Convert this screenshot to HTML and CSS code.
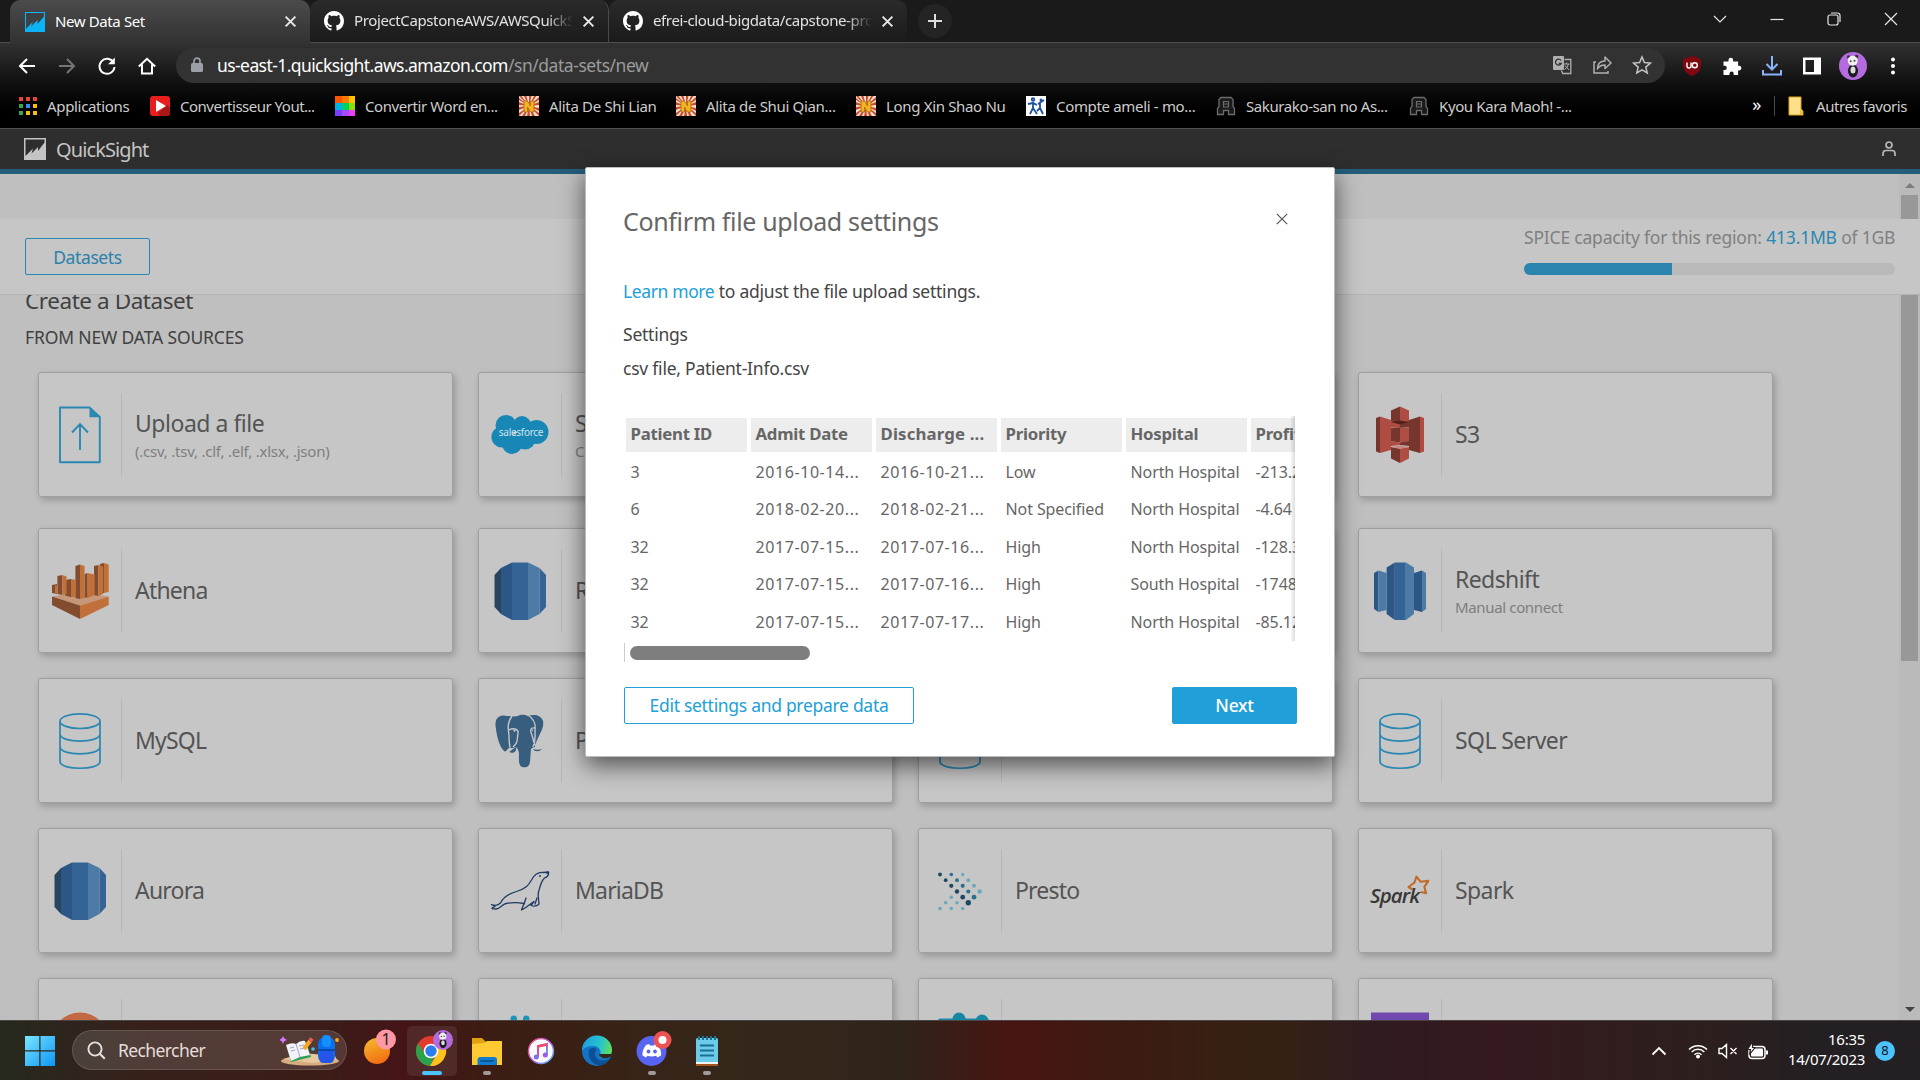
FILE: index.html
```html
<!DOCTYPE html>
<html lang="fr">
<head>
<meta charset="utf-8">
<title>New Data Set</title>
<link rel="stylesheet" href="styles.css">
</head>
<body>
<svg class="defs" width="0" height="0" aria-hidden="true">
  <symbol id="github" viewBox="0 0 16 16"><path fill="#fff" d="M8 0C3.58 0 0 3.58 0 8c0 3.54 2.29 6.53 5.47 7.59.4.07.55-.17.55-.38 0-.19-.01-.82-.01-1.49-2.01.37-2.53-.49-2.69-.94-.09-.23-.48-.94-.82-1.13-.28-.15-.68-.52-.01-.53.63-.01 1.08.58 1.23.82.72 1.21 1.87.87 2.33.66.07-.52.28-.87.51-1.07-1.78-.2-3.64-.89-3.64-3.95 0-.87.31-1.59.82-2.15-.08-.2-.36-1.02.08-2.12 0 0 .67-.21 2.2.82.64-.18 1.32-.27 2-.27s1.36.09 2 .27c1.53-1.04 2.2-.82 2.2-.82.44 1.1.16 1.92.08 2.12.51.56.82 1.27.82 2.15 0 3.07-1.87 3.75-3.65 3.95.29.25.54.73.54 1.48 0 1.07-.01 1.93-.01 2.2 0 .21.15.46.55.38A8 8 0 0 0 16 8c0-4.42-3.58-8-8-8z"/></symbol>
  <symbol id="cross" viewBox="0 0 12 12"><path d="M1.500 1.500l9 9M10.500 1.500l-9 9" fill="none" stroke="currentColor" stroke-width="1.800"/></symbol>
  <symbol id="rays" viewBox="0 0 20 20"><rect width="20" height="20" fill="#f3e2d2"/><path fill="#cf4a2a" d="M10 10L0 0h2.500zM10 10L5 0h2.500zM10 10L10 0h2.500zM10 10L15 0h2.500zM10 10L20 1v3zM10 10L20 6v3zM10 10L20 12v3zM10 10L20 17v3zM10 10L16 20h-3zM10 10L11 20H8zM10 10L6 20H3zM10 10L0 20v-3zM10 10L0 14v-3zM10 10L0 9V6zM10 10L0 4V2z"/><path fill="#f4b41c" stroke="#a8641a" stroke-width=".8" d="M5 5h3.500l3 5V5H15v11h-3.500l-3-5v5H5z"/></symbol>
  <symbol id="arch" viewBox="0 0 20 20"><path fill="#1a1a1a" stroke="#6c6c6c" stroke-width="1.300" d="M5 1.500h10l2 2v7l1.500 2v6h-6v-4h-5v4h-6v-6l1.500-2v-7z"/><path fill="none" stroke="#6c6c6c" stroke-width="1.200" d="M7.500 11V5.500h5V11zM8 8h4"/></symbol>
  <symbol id="database" viewBox="0 0 60 60"><g fill="none" stroke="#2b88b2" stroke-width="1.700"><ellipse cx="30" cy="10.200" rx="20" ry="7.300"/><path d="M10 10.200V50.500c0 9 40 9 40 0V10.200M10 23c0 9.500 40 9.500 40 0M10 35.800c0 9.500 40 9.500 40 0"/></g></symbol>
  <symbol id="rds" viewBox="0 0 60 60"><path fill="#27455e" d="M4.500 14L11 7v46l-6.500-7z"/><path fill="#2b5685" d="M11 7l11-5.500V59l-11-6z"/><path fill="#346496" d="M22 1.500h16V59H22zM49.500 7l6.500 7v32l-6.500 7z"/><path fill="#4d7ba6" d="M38 1.500L49.500 7v46L38 59z"/></symbol>
  <symbol id="panda" viewBox="0 0 28 28"><circle cx="14" cy="14" r="14" fill="#b56be0"/><ellipse cx="14" cy="19" rx="5" ry="6.500" fill="#1d1b1f"/><ellipse cx="14" cy="18" rx="2.500" ry="3.500" fill="#ddd"/><circle cx="9.700" cy="5" r="1.800" fill="#333"/><circle cx="17.500" cy="4.500" r="1.800" fill="#333"/><circle cx="13.700" cy="8.700" r="5" fill="#f0f0f0"/><circle cx="11.700" cy="9.200" r="1" fill="#444"/><circle cx="15.500" cy="8.700" r="1" fill="#444"/></symbol>
</svg>

<div class="tabs">
  <div class="tab tab-active">
    <svg class="fav" viewBox="0 0 20 20"><rect width="20" height="20" fill="#0cb4f5"/><path fill="#3d4146" d="M1 1h18v3.500L12.500 12V8L6 14.500l2-5L1 17z"/></svg>
    <span class="tab-text t-active">New Data Set</span>
    <svg class="tab-x"><use href="#cross"/></svg>
  </div>
  <div class="tab">
    <svg class="fav"><use href="#github"/></svg>
    <span class="tab-text fade">ProjectCapstoneAWS/AWSQuickSight</span>
    <svg class="tab-x"><use href="#cross"/></svg>
  </div>
  <div class="tab tab-last">
    <svg class="fav"><use href="#github"/></svg>
    <span class="tab-text fade">efrei-cloud-bigdata/capstone-project</span>
    <svg class="tab-x"><use href="#cross"/></svg>
  </div>
  <div class="new-tab"><svg width="16" height="16" viewBox="0 0 16 16"><path d="M8 1v14M1 8h14" stroke="#ddd" stroke-width="2"/></svg></div>
  <div class="win-controls">
    <svg viewBox="0 0 14 14"><path d="M1 4l6 6 6-6"/></svg>
    <svg viewBox="0 0 14 14"><path d="M.5 7.500h13"/></svg>
    <svg viewBox="0 0 14 14"><rect x="1" y="3" width="10" height="10" rx="2"/><path d="M4 1h6.500a2.500 2.500 0 0 1 2.500 2.500V10"/></svg>
    <svg viewBox="0 0 14 14"><path d="M1 1l12 12M13 1L1 13"/></svg>
  </div>
</div>

<div class="navbar">
  <div class="nav-icons">
    <svg viewBox="0 0 20 20"><path d="M18 10H3M10 3l-7 7 7 7"/></svg>
    <svg class="off" viewBox="0 0 20 20"><path d="M2 10h15M10 3l7 7-7 7"/></svg>
    <svg viewBox="0 0 20 20"><path d="M16.500 6.500A7.500 7.500 0 1 0 17.500 11"/><path d="M17.800 1.500v6.700h-6.700z" fill="#fff" stroke="none"/></svg>
    <svg viewBox="0 0 20 20"><path d="M1.800 10.500L10 2.800l8.200 7.700M5 8.500V17.500h10V8.500"/></svg>
  </div>
  <div class="omnibox">
    <svg class="lock" width="12" height="16" viewBox="0 0 12 16"><rect y="6" width="12" height="9" rx="1.500" fill="#9aa0a6"/><path d="M3 6V4.200a3 3 0 0 1 6 0V6" fill="none" stroke="#9aa0a6" stroke-width="1.700"/></svg>
    <span class="url">us-east-1.quicksight.aws.amazon.com<span class="path">/sn/data-sets/new</span></span>
    <div class="omni-icons">
      <svg viewBox="0 0 20 20"><rect x="1" y="1" width="11" height="14" rx="1" fill="#b0b0b0"/><path d="M9 5.500A3 3 0 1 0 9.200 8.500H6.800" fill="none" stroke="#333" stroke-width="1.300"/><path d="M12.500 4.500h6.300v14h-8l-1.500-3" fill="none" stroke="#b0b0b0" stroke-width="1.300"/><path d="M11.500 9h6M14.500 7.500V9M16.500 9q-1 4-4 5.500M13 10.500l4 4.500" stroke="#b0b0b0" fill="none"/></svg>
      <svg viewBox="0 0 20 20"><path d="M4 7H2v11h14v-2" fill="none" stroke="#b0b0b0" stroke-width="1.500"/><path d="M5.500 14c0-5 2-8 7.500-8V2l6 6-6 5.500V10c-4 0-6 1-7.500 4z" fill="none" stroke="#b0b0b0" stroke-width="1.500" stroke-linejoin="round"/></svg>
      <svg viewBox="0 0 20 20"><path d="M10 2l2.400 5.600 6 .5-4.600 4 1.400 5.900-5.200-3.200L4.800 18l1.400-5.900-4.600-4 6-.5z" fill="none" stroke="#c4c4c4" stroke-width="1.500"/></svg>
    </div>
  </div>
  <div class="ext-icons">
    <svg viewBox="0 0 20 20"><path d="M10 0l9 3v6c0 5-4 9-9 11C5 18 1 14 1 9V3z" fill="#800610"/><path d="M5 6.500v3.500q0 2 2 2t2-2V6.500" fill="none" stroke="#fff" stroke-width="1.400"/><circle cx="12.800" cy="9.200" r="2.500" fill="none" stroke="#fff" stroke-width="1.400"/></svg>
    <svg viewBox="0 0 20 20"><path fill="#fff" d="M1.500 5.500h5V4a2.300 2.300 0 0 1 4.600 0v1.500h5v4.300h1a2.300 2.300 0 0 1 0 4.600h-1v4.600h-4.400v-1.500a2.100 2.100 0 0 0-4.200 0V19h-6v-5h1.200a2.100 2.100 0 0 0 0-4.200H1.500z"/></svg>
    <svg viewBox="0 0 20 20"><path fill="none" stroke="#8ab4f8" stroke-width="2" d="M10 0v13M4.500 8l5.500 5.500L15.500 8M1 14v4.500h18V14"/></svg>
    <svg viewBox="0 0 20 20"><path fill="#fff" fill-rule="evenodd" d="M1 1.500h18v17H1zM3.500 4v12H12V4z"/></svg>
    <svg class="avatar"><use href="#panda"/></svg>
    <svg viewBox="0 0 20 20"><g fill="#fff"><circle cx="9" cy="3.500" r="2"/><circle cx="9" cy="10" r="2"/><circle cx="9" cy="16.500" r="2"/></g></svg>
  </div>
</div>

<div class="bookmarks">
  <div class="bm b1"><svg viewBox="0 0 20 20"><g fill="#ea4335"><path d="M1 1h4v4H1zM8 1h4v4H8zM15 1h4v4h-4z"/></g><path fill="#34a853" d="M1 8h4v4H1zM1 15h4v4H1z"/><path fill="#4285f4" d="M8 8h4v4H8z"/><path fill="#fbbc05" d="M15 8h4v4h-4zM8 15h4v4H8zM15 15h4v4h-4z"/></svg><span>Applications</span></div>
  <div class="bm b2"><svg viewBox="0 0 20 20"><rect width="20" height="20" rx="3" fill="#e91d1d"/><path d="M8 17l9-8 3 3v5a3 3 0 0 1-3 3H10z" fill="#a81616"/><path fill="#fff" d="M6 4l10 6-10 6z"/></svg><span>Convertisseur Yout...</span></div>
  <div class="bm b3"><svg viewBox="0 0 20 20"><path fill="#f50" d="M0 0h7v7H0z"/><path fill="#ff7a00" d="M7 0h7v7H7z"/><path fill="#ffc400" d="M14 0h6v7h-6z"/><path fill="#00b2e3" d="M0 7h7v7H0z"/><path fill="#00d06a" d="M7 7h7v7H7z"/><path fill="#8be000" d="M14 7h6v7h-6z"/><path fill="#7a3cff" d="M0 14h7v6H0z"/><path fill="#a64cff" d="M7 14h7v6H7z"/><path fill="#f03cf5" d="M14 14h6v6h-6z"/></svg><span>Convertir Word en...</span></div>
  <div class="bm b4"><svg><use href="#rays"/></svg><span>Alita De Shi Lian</span></div>
  <div class="bm b5"><svg><use href="#rays"/></svg><span>Alita de Shui Qian...</span></div>
  <div class="bm b6"><svg><use href="#rays"/></svg><span>Long Xin Shao Nu</span></div>
  <div class="bm b7"><svg viewBox="0 0 20 20"><rect width="20" height="20" fill="#fff"/><g stroke="#1c50a0" stroke-width="1.800" fill="none"><circle cx="7" cy="3.500" r="1.300"/><path d="M7 6v6l-3 6M7 12l4 6M2 8l5-1 4 2M14 7v5l-3 3M14 12l3 6M12 8l6-4"/></g><circle cx="15" cy="4" r="1.500" fill="#1c50a0"/></svg><span>Compte ameli - mo...</span></div>
  <div class="bm b8"><svg><use href="#arch"/></svg><span>Sakurako-san no As...</span></div>
  <div class="bm b9"><svg><use href="#arch"/></svg><span>Kyou Kara Maoh! -...</span></div>
  <div class="bm-end">
    <span class="more">»</span>
    <i class="bm-sep"></i>
    <svg width="18" height="20" viewBox="0 0 18 20"><path fill="#ffe08a" stroke="#d9a520" d="M1 1h12v12l2 2v4H1z"/><path fill="#f0bd3a" d="M12 13l3 2v4h-3z"/></svg>
    <span class="favs">Autres favoris</span>
  </div>
</div>

<header class="app-header">
  <svg width="22" height="22" viewBox="0 0 22 22"><rect width="22" height="22" fill="#c4c4c4"/><path fill="#2e2e2e" d="M1.500 1.500h19v3L14 13V9l-6.500 6.500 1.500-5L1.500 18z"/></svg>
  <span class="brand">QuickSight</span>
  <svg class="user" width="14" height="16" viewBox="0 0 14 16"><g fill="none" stroke="#b8b8b8" stroke-width="1.700"><circle cx="7" cy="4" r="3"/><path d="M1 15v-2.500a3 3 0 0 1 3-3h6a3 3 0 0 1 3 3V15"/></g></svg>
</header>

<main class="page">
  <div class="band"><div class="track track-top"><i class="arrow up"></i><i class="thumb"></i></div></div>
  <div class="toolbar">
    <button class="btn-datasets">Datasets</button>
    <div class="spice">
      <div class="spice-text">SPICE capacity for this region: <b>413.1MB</b> of 1GB</div>
      <div class="meter"><i style="width:39.9%"></i></div>
    </div>
  </div>
  <div class="content">
    <div class="sources">
      <h1>Create a Dataset</h1>
      <h2>FROM NEW DATA SOURCES</h2>
      <div class="grid grid-first">
        <div class="card">
          <div class="icon"><svg viewBox="0 0 60 60"><path d="M10 2.500h29.500L49.800 12v45.300H10z" fill="none" stroke="#2b88b2" stroke-width="1.900" stroke-linejoin="round"/><path fill="#2b88b2" d="M39.500 2L50 12.300H39.500z"/><path d="M30 45V19.500M22 27.500l8-8.300 8 8.300" fill="none" stroke="#2b88b2" stroke-width="1.900"/></svg></div>
          <div class="label two"><span class="name upload">Upload a file</span><span class="sub">(.csv, .tsv, .clf, .elf, .xlsx, .json)</span></div>
        </div>
        <div class="card">
          <div class="icon"><svg viewBox="0 0 60 60"><g fill="#1887b6"><circle cx="16" cy="20.500" r="10.500"/><circle cx="32" cy="20" r="9"/><circle cx="46.500" cy="27" r="12"/><circle cx="12" cy="32" r="10.600"/><circle cx="22" cy="39" r="10"/><circle cx="35" cy="34" r="10.500"/></g><text x="31" y="31" class="sf-text">salesforce</text></svg></div>
          <div class="label two"><span class="name">Salesforce</span><span class="sub">Connect to Salesforce</span></div>
        </div>
        <div class="card"></div>
        <div class="card">
          <div class="icon"><svg viewBox="0 0 60 60"><path fill="#76362d" d="M6 13l4-1.500V48l-4-1.500zM50 11.500L39 15v30l11 3z"/><path fill="#b04d42" d="M10 11.500L21 15v30l-11 3zM50 11.500l4 1.500v33.500L50 48z"/><path fill="#76362d" d="M21 5.500l9-4V19l-9-2.500zM21 23l9-1v15.500l-9-1.200zM21 42l9 1.500V58l-9-4.500z"/><path fill="#b04d42" d="M39 5.500l-9-4V19l9-2.500zM39 23l-9-1v15.500l9-1.200zM39 42l-9 1.500V58l9-4.500zM21 16v6.500h9V19zM21 36v5l9-1v-2.500z"/><path fill="#76362d" d="M39 16v6.500h-9V19zM39 36v5l-9-1v-2.500z"/><path fill="#551f1a" d="M21 17l9-1.500 9 1.500-9 2.500z"/><path fill="#c88880" d="M21 42l9-1.700 9 1.700-9 2z"/></svg></div>
          <div class="label"><span class="name wide">S3</span></div>
        </div>
      </div>
      <div class="grid">
        <div class="card">
          <div class="icon"><svg viewBox="0 0 60 60"><path fill="#c69778" d="M2 35.500L30 31l28.700 4.500L30 44.500z"/><path fill="#834c2e" d="M2 35.500l28 9V58L2 44z"/><path fill="#c2703a" d="M58.700 35.500l-28.700 9V58l28.700-14z"/><path fill="#834c2e" d="M2 24l5-1v10l-5-1zM7.400 15l5-1v20l-5-1zM15 19l6-1v18l-6-1.500zM25.400 5l4.600-1.500V38l-4.600-1zM34.600 13l3-1v25l-3-1zM44 5l4.500-1v31L44 34zM50 3l4-1v30h-4z"/><path fill="#c2703a" d="M12.400 14l4.200 1.500V33l-4.200 1zM5 24l2.400 1v7L5 33zM21 18l4.800 1v17L21 36zM30 3.500L34.600 5v32L30 38zM37.600 12l7 1.500V34l-7 3zM48.500 4l4.700 1.500V33l-4.700 2zM54 2l4.700 1.500V31L54 32z"/></svg></div>
          <div class="label"><span class="name">Athena</span></div>
        </div>
        <div class="card"><div class="icon"><svg><use href="#rds"/></svg></div><div class="label"><span class="name">RDS</span></div></div>
        <div class="card"></div>
        <div class="card">
          <div class="icon"><svg viewBox="0 0 60 60"><path fill="#2b5685" d="M4 12l4.500-2.500V51L4 48zM16.600 6.500l8.200-5V59l-8.200-6zM44 12l8-2.500V51l-8-2z"/><path fill="#4d7ba6" d="M8.500 9.500l8.100 2.500v37l-8.100 2zM35 1.500h1l8 5V53l-8 6h-1zM52 9.500l4 2.500v36l-4 3z"/><path fill="#346496" d="M24.800 1.500H35V59H24.800z"/></svg></div>
          <div class="label two"><span class="name wide">Redshift</span><span class="sub tight">Manual connect</span></div>
        </div>
        <div class="card"><div class="icon"><svg><use href="#database"/></svg></div><div class="label"><span class="name">MySQL</span></div></div>
        <div class="card">
          <div class="icon"><svg viewBox="0 0 60 60"><path fill="#375d7f" d="M16 5C8 3 4 9 6 18c1 9 4 18 8 22 2 2 4-3 6-4 1 2 4 1 5 0 2 0 3 2 4 6 0 6-1 12 3 14 4 1 7 0 8-5l1-13c1-1 2-2 4-2 1-9 10-18 8-26C51 4 44 3 38 5c-3-1-6-2-10 0-4 1-7 0-12 0z"/><g fill="none" stroke="#c6c6c6" stroke-width="1.400"><path d="M22 5c-5 7-4 12-3 19 0 5 0 8 1 12M38 4c6 4 8 8 7 15 0 8 1 10-2 17M19 19c5-3 10 0 9 3-1 7 0 10-5 14M45 17c-5-1-5 3-3 7 1 5 2 8 4 12"/></g><path fill="#375d7f" d="M19 41c4 2 8 0 7-5zM43 38c3 1 6 1 9 0-3 3-7 3-9 0z"/><path fill="#dce5ec" d="M23 19l3 .5-1.500 1.500zM41.500 18.500l2 .5-1 1z"/></svg></div>
          <div class="label"><span class="name">PostgreSQL</span></div>
        </div>
        <div class="card"><div class="icon"><svg><use href="#database"/></svg></div><div class="label"></div></div>
        <div class="card"><div class="icon"><svg><use href="#database"/></svg></div><div class="label"><span class="name wide">SQL Server</span></div></div>
        <div class="card"><div class="icon"><svg><use href="#rds"/></svg></div><div class="label"><span class="name">Aurora</span></div></div>
        <div class="card">
          <div class="icon"><svg viewBox="0 0 60 60"><g fill="none" stroke="#1f3a63" stroke-width="1.300" stroke-linejoin="round" stroke-linecap="round"><path d="M1.500 43.500c3 1.500 6 1 9-1.500 3-7 9-9.500 16-11.500 9-3 12-6 15-11.500 3-6 7-8 12-7.500l5-.5c.5 3-1 5-4 6-3.500 3-4.500 9-6 14-1 5 .5 8 .5 12-2 2-5 2.500-8 1.500l3-4-9 6.500-3.500 2 2.500-6.500c-7-1.500-13-1-18 0-4 1-6 5.500-10 5.500-2-.5-4 .5-4-1l3-1.500z"/><path d="M36 37l-2 6M47 37l-2 6"/></g><circle cx="57.500" cy="11.800" r="1.300" fill="#1f3a63"/><circle cx="50" cy="15" r=".9" fill="#1f3a63"/></svg></div>
          <div class="label"><span class="name">MariaDB</span></div>
        </div>
        <div class="card">
          <div class="icon"><svg viewBox="0 0 60 60"><g fill="#1d4862"><circle cx="10" cy="13.500" r="1.900"/><circle cx="15.700" cy="19.200" r="1.900"/><circle cx="21.300" cy="24.800" r="2.100"/><circle cx="27" cy="30.500" r="2.200"/><circle cx="32.700" cy="36.200" r="2.400"/><circle cx="38.300" cy="41.800" r="2.700"/></g><g fill="#28708f"><circle cx="21.300" cy="13.500" r="1.800"/><circle cx="27" cy="19.200" r="1.900"/><circle cx="32.700" cy="24.800" r="2.100"/><circle cx="38.300" cy="30.500" r="2.100"/><circle cx="44" cy="36.200" r="2.400"/></g><g fill="#69a9c0"><circle cx="32.700" cy="13.500" r="1.700"/><circle cx="38.300" cy="19.200" r="1.900"/><circle cx="44" cy="24.800" r="2"/><circle cx="49.700" cy="30.500" r="2.300"/><circle cx="21.300" cy="36.200" r="1.800"/><circle cx="15.700" cy="41.800" r="1.800"/><circle cx="27" cy="41.800" r="1.800"/><circle cx="10" cy="47.500" r="1.800"/><circle cx="21.300" cy="47.500" r="1.800"/><circle cx="32.700" cy="47.500" r="1.800"/></g></svg></div>
          <div class="label"><span class="name">Presto</span></div>
        </div>
        <div class="card">
          <div class="icon"><svg viewBox="0 0 60 60"><path d="M42.500 28.500L38.500 26l6-4.500L46.500 15.700l4.200 5.100 7.600-1-4 6 1.800 6.500-5.300-1.300" fill="none" stroke="#bf6a2a" stroke-width="2.100" stroke-linejoin="round"/><text x="0" y="42" class="spark-text">Spark</text></svg></div>
          <div class="label"><span class="name wide">Spark</span></div>
        </div>
        <div class="card"><div class="icon"><svg viewBox="0 0 60 60"><circle cx="30" cy="30" r="28.500" fill="#c26843"/></svg></div><div class="label"></div></div>
        <div class="card"><div class="icon"><svg viewBox="0 0 60 60"><rect x="20.500" y="4.500" width="6.500" height="20" rx="3.200" fill="#1c93b9"/><rect x="33" y="4.500" width="6.500" height="20" rx="3.200" fill="#1c93b9"/></svg></div><div class="label"></div></div>
        <div class="card"><div class="icon"><svg viewBox="0 0 60 60"><g fill="#1887a3"><rect x="8" y="7.500" width="51" height="30" rx="2"/><circle cx="29" cy="8" r="6.500"/><circle cx="52" cy="10" r="6.500"/></g></svg></div><div class="label"></div></div>
        <div class="card"><div class="icon"><svg viewBox="0 0 60 60"><rect x="1" y="1.500" width="58" height="57" fill="#7049ae"/></svg></div><div class="label"></div></div>
      </div>
    </div>
    <div class="track track-main"><i class="thumb"></i><i class="arrow down"></i></div>
  </div>

  <section class="modal">
    <div class="modal-head"><h3>Confirm file upload settings</h3><svg width="12" height="12" viewBox="0 0 12 12"><path d="M.8.8l10.400 10.400M11.200.8L.8 11.200" stroke="#555" stroke-width="1.200"/></svg></div>
    <p class="learn"><a>Learn more</a> to adjust the file upload settings.</p>
    <p class="set">Settings</p>
    <p class="csv">csv file, Patient-Info.csv</p>
    <div class="preview">
      <table>
        <tr><th>Patient ID</th><th>Admit Date</th><th class="loose">Discharge ...</th><th>Priority</th><th>Hospital</th><th>Profit</th></tr>
        <tr><td>3</td><td class="date">2016-10-14...</td><td class="date">2016-10-21...</td><td>Low</td><td>North Hospital</td><td>-213.2</td></tr>
        <tr><td>6</td><td class="date">2018-02-20...</td><td class="date">2018-02-21...</td><td>Not Specified</td><td>North Hospital</td><td>-4.64</td></tr>
        <tr><td>32</td><td class="date">2017-07-15...</td><td class="date">2017-07-16...</td><td>High</td><td>North Hospital</td><td>-128.3</td></tr>
        <tr><td>32</td><td class="date">2017-07-15...</td><td class="date">2017-07-16...</td><td>High</td><td>South Hospital</td><td>-1748</td></tr>
        <tr><td>32</td><td class="date">2017-07-15...</td><td class="date">2017-07-17...</td><td>High</td><td>North Hospital</td><td>-85.12</td></tr>
      </table>
    </div>
    <div class="hscroll"><i></i></div>
    <div class="actions"><button class="btn-edit">Edit settings and prepare data</button><button class="btn-next">Next</button></div>
  </section>
</main>

<footer class="taskbar">
  <svg class="win" width="30" height="30" viewBox="0 0 30 30"><defs><linearGradient id="wg" x1="0" y1="0" x2="1" y2="1"><stop offset="0" stop-color="#7be6ff"/><stop offset="1" stop-color="#0a95f5"/></linearGradient></defs><path fill="url(#wg)" d="M0 0h14.300v14.300H0zM15.500 0H30v14.300H15.500zM0 15.500h14.300V30H0zM15.500 15.500H30V30H15.500z"/></svg>
  <div class="search">
    <svg width="19" height="19" viewBox="0 0 19 19"><circle cx="8" cy="8" r="6.600" fill="none" stroke="#e6e2e1" stroke-width="1.900"/><path d="M12.800 12.800l5 5" stroke="#e6e2e1" stroke-width="2"/></svg>
    <span>Rechercher</span>
    <svg class="art" width="60" height="32" viewBox="0 0 60 32"><ellipse cx="30" cy="27" rx="29" ry="4.500" fill="#d7ad80"/><path fill="#e7c79c" d="M3 25l20-6 32 3 2 4-25 3z"/><path fill="#2f9e55" d="M7 14l4 14 20-5-4-13z"/><path fill="#f2f2f8" d="M6 11q6-3 10-1 5-4 9-3l5 14-10 2-9 4z"/><path stroke="#a5a2c8" fill="none" d="M16 10l4 13M10 14l4-1M11 17l4-1M19 12l5-1M20 15l5-1"/><path stroke="#f5a623" stroke-width="4" d="M24 15l6-8"/><path stroke="#f05a55" stroke-width="4" d="M30 7l2-2.500"/><rect x="38" y="3" width="17" height="26" rx="7" fill="#0a6fe8"/><rect x="42" y="1" width="9" height="12" rx="4" fill="#1591ff"/><rect x="39.500" y="17" width="14" height="12" rx="4" fill="#2454e8"/><path d="M38 16h17" stroke="#063c9e" stroke-width="1.500"/><path fill="#d378ff" d="M3 2l1.200 2.300L7 6 4.200 7.200 3 10 1.800 7.200-1 6l2.800-1.700z"/><circle cx="33" cy="15" r="1.800" fill="#37c6e0"/><circle cx="57" cy="6" r="1.900" fill="#ffa91f"/></svg>
  </div>
  <div class="apps">
    <div class="app"><svg viewBox="0 0 50 50"><defs><linearGradient id="og" x1=".3" y1="0" x2=".7" y2="1"><stop offset="0" stop-color="#f4b52c"/><stop offset="1" stop-color="#f36a10"/></linearGradient></defs><circle cx="25" cy="25" r="13" fill="url(#og)"/><circle cx="34" cy="13.500" r="10" fill="#ff98a3"/><text x="34" y="19" class="one">1</text></svg></div>
    <div class="app app-on"><svg viewBox="0 0 50 50"><circle cx="24" cy="25" r="15" fill="#e23b2e"/><path fill="#2ba24c" d="M11 17.500a15 15 0 0 0 12 22.500l6-12-5-3-6 3z"/><path fill="#fcc31e" d="M24 18h13.300A15 15 0 0 1 23 40l7-12z"/><circle cx="24" cy="25" r="7.300" fill="#fff"/><circle cx="24" cy="25" r="5.700" fill="#2a7cf0"/><use href="#panda" x="26" y="4" width="20" height="20"/></svg><i></i></div>
    <div class="app"><svg viewBox="0 0 50 50"><path fill="#e0a10e" d="M10 12h10l4 4v5H10z"/><path fill="#ffc933" d="M10 18l12-1 3-2h15v24H10z"/><path fill="#0f7cd0" d="M15.500 39v-5a3 3 0 0 1 3-3H32a3 3 0 0 1 3 3v5z"/><path stroke="#0b4a86" stroke-width="1.500" d="M18.500 35h13"/></svg><i></i></div>
    <div class="app"><svg viewBox="0 0 50 50"><defs><linearGradient id="mg" x1="0" y1="0" x2="1" y2="1"><stop offset="0" stop-color="#f24a6a"/><stop offset=".5" stop-color="#b85de0"/><stop offset="1" stop-color="#3fc2f0"/></linearGradient></defs><circle cx="24" cy="25" r="12.500" fill="#fafafa" stroke="url(#mg)" stroke-width="1.500"/><path fill="none" stroke="url(#mg)" stroke-width="2" d="M21 31V20l9-2v11"/><path stroke="#f24a6a" stroke-width="2.500" d="M21 20.500l9-2"/><circle cx="19.300" cy="31" r="2.500" fill="#7f6cf0"/><circle cx="28.300" cy="29" r="2.500" fill="#9b5de5"/></svg></div>
    <div class="app"><svg viewBox="0 0 50 50"><defs><linearGradient id="eg" x1="0" y1=".3" x2="1" y2=".5"><stop offset="0" stop-color="#1b9de2"/><stop offset=".6" stop-color="#27c3cf"/><stop offset="1" stop-color="#5fe05a"/></linearGradient></defs><circle cx="25" cy="25" r="15" fill="#1373c6"/><path fill="url(#eg)" d="M10 25a15 15 0 0 1 30-1c0 5-4 8-8 8-3 0-5-1-4.500-2.500 2-2 1.500-9-5.500-9.500-6 0-11 2-12 5z"/><path fill="#0d4f94" d="M17 24c-2 7 3 15 11 15.500 5-1 8-4 9.500-7-6 4-14 2-14.500-4.500 0-3 2-5 2-5-4-2-7-1-8 1z"/><path fill="#34261a" d="M27 28c0 4 6 5.500 11 3 2-1 2 1 1 3l3 1 1-7z"/></svg></div>
    <div class="app"><svg viewBox="0 0 50 50"><circle cx="24.500" cy="25" r="15" fill="#5865f2"/><path fill="#fff" fill-rule="evenodd" d="M19 19l3-1 1 1.500h4L28 18l3 1c2.500 3.500 3.500 7 3 10.500L30.500 31.500 29 29.800q-4.500 1.200-8.500 0L19 31.500 15.500 29.500C15 26 16.500 22 19 19zM21.500 23.500a1.900 2 0 1 0 .01 0zM28 23.500a1.900 2 0 1 0 .01 0z"/><circle cx="35.500" cy="14" r="9" fill="#ee5253"/><circle cx="35.500" cy="14" r="4" fill="#fff"/></svg><i></i></div>
    <div class="app"><svg viewBox="0 0 50 50"><rect x="14" y="12" width="22" height="28" rx="1.500" fill="#6ccbe8"/><path fill="#f2f2f2" d="M14 36h22v2H14z"/><path fill="#a5521b" d="M14 38h22v1a1 1 0 0 1-1 1H15a1 1 0 0 1-1-1z"/><path stroke="#1b6e93" stroke-width="1.800" d="M18 19.500h14M18 24.500h14M18 29.500h14"/><path stroke="#1d7196" stroke-width="2" d="M17 10v4M21 10v4M25 10v4M29 10v4M33 10v4"/></svg><i></i></div>
  </div>
  <div class="tray">
    <svg class="t-chev" width="16" height="10" viewBox="0 0 16 10"><path d="M1.500 8.500L8 2l6.500 6.500" fill="none" stroke="#fff" stroke-width="1.900"/></svg>
    <svg class="t-wifi" width="20" height="16" viewBox="0 0 20 16"><g fill="none" stroke="#fff" stroke-width="1.500"><path d="M1 6.500a12.500 12.500 0 0 1 18 0M3.700 9a8.800 8.800 0 0 1 12.600 0M6.500 11.700a5 5 0 0 1 7 0"/></g><circle cx="10" cy="13.500" r="2" fill="#fff"/></svg>
    <svg class="t-vol" width="20" height="16" viewBox="0 0 20 16"><path d="M1 5.500h3l4.500-4v13L4 10.500H1zM12.500 5l6 6M18.500 5l-6 6" fill="none" stroke="#fff" stroke-width="1.400"/></svg>
    <svg class="t-bat" width="20" height="18" viewBox="0 0 20 18"><rect x="1" y="4.500" width="16" height="12" rx="3" fill="none" stroke="#fff" stroke-width="1.500"/><rect x="3" y="6.500" width="12" height="8" rx="1" fill="#fff"/><path d="M18 8.500h2v4h-2z" fill="#fff"/><path fill="#fff" stroke="#2a1e20" stroke-width="1.200" d="M4.500-.5L-.5 7.500h3l-1 5 5.500-7H4.500z"/></svg>
    <div class="clock"><span>16:35</span><span>14/07/2023</span></div>
    <div class="count">8</div>
  </div>
</footer>
</body>
</html>
```
FILE: styles.css
```css
* { box-sizing: border-box; margin: 0; padding: 0; }
html, body { width: 1920px; height: 1080px; overflow: hidden; }
body { display: flex; flex-direction: column; background: #bfbfbf; font-family: "Noto Sans", "Open Sans", sans-serif; }
svg { display: block; flex: none; }
.defs { position: absolute; }
button { font-family: inherit; }

/* browser tabs */
.tabs { height: 43px; display: flex; background: #1a1a1a; border-bottom: 1px solid #4c4c4c; color: #e2e2e2; padding-left: 10px; flex: none; }
.tab { width: 299px; height: 42px; display: flex; align-items: center; padding: 0 13px 0 14px; background: linear-gradient(#2a2a2a, #1b1b1b); border-radius: 10px 10px 0 0; border-right: 1px solid #4a4a4a; }
.tab-active { width: 300px; height: 43px; padding-left: 15px; background: linear-gradient(#4b4b4b, #323232); border-right: 0; }
.tab-last { width: 298px; border-right: 0; }
.fav { width: 20px; height: 20px; }
.tab-text { flex: 1; margin: 0 9px 2px 10px; font-size: 15px; letter-spacing: -.38px; white-space: nowrap; overflow: hidden; }
.t-active { color: #fff; }
.fade { -webkit-mask-image: linear-gradient(90deg, #000 88%, transparent); mask-image: linear-gradient(90deg, #000 88%, transparent); }
.tab-x { width: 13px; height: 13px; color: #e8e8e8; }
.new-tab { width: 34px; height: 34px; margin: 4px 0 0 11px; border-radius: 50%; background: #242424; display: flex; align-items: center; justify-content: center; }
.win-controls { margin-left: auto; display: flex; gap: 43px; padding: 12px 22px 0 0; }
.win-controls svg { width: 14px; height: 14px; fill: none; stroke: #e6e6e6; stroke-width: 1.2; }

/* navigation bar */
.navbar { height: 42px; display: flex; align-items: center; background: linear-gradient(#323232, #0e0e0e); padding: 3px 0 0 17px; flex: none; }
.nav-icons { display: flex; gap: 20px; width: 159px; }
.nav-icons svg { width: 20px; height: 20px; fill: none; stroke: #fff; stroke-width: 2; }
.nav-icons .off { stroke: #757575; }
.omnibox { width: 1489px; height: 35px; margin-top: -1px; border-radius: 18px; background: #323232; display: flex; align-items: center; padding: 0 13px 0 15px; }
.url { flex: 1; margin: 0 0 0 14px; font-size: 17.5px; letter-spacing: -.58px; color: #fff; }
.path { color: #9b9b9b; letter-spacing: -.45px; }
.omni-icons { display: flex; gap: 20px; }
.omni-icons svg, .ext-icons svg { width: 20px; height: 20px; }
.ext-icons { display: flex; align-items: center; gap: 20px; margin-left: 17px; }
.ext-icons .avatar { width: 28px; height: 28px; margin: 0 -3px; }

/* bookmarks */
.bookmarks { height: 44px; display: flex; align-items: center; background: linear-gradient(#0e0e0e, #000 60%); border-bottom: 1px solid #4f4f4f; color: #cdcdcd; font-size: 15px; padding: 0 0 2px 18px; flex: none; }
.bm { display: flex; align-items: center; gap: 10px; white-space: nowrap; height: 30px; letter-spacing: -.33px; }
.bm svg { width: 20px; height: 20px; }
.b1 { width: 132px; gap: 9px; } .b2 { width: 185px; letter-spacing: -.5px; } .b3 { width: 184px; letter-spacing: -.42px; } .b4 { width: 157px; }
.b5 { width: 180px; } .b6 { width: 170px; } .b7 { width: 190px; } .b8 { width: 193px; letter-spacing: -.4px; } .b9 { letter-spacing: -.38px; }
.bm-end { margin-left: auto; margin-right: 13px; display: flex; align-items: center; letter-spacing: -.45px; }
.more { color: #fff; font-size: 18px; margin: -3px 13px 0 0; }
.bm-sep { width: 1px; height: 20px; background: #4a4a4a; margin-right: 13px; }
.favs { margin-left: 10px; }

/* application header */
.app-header { height: 45px; background: #2e2e2e; border-bottom: 5px solid #255e7c; display: flex; align-items: center; padding: 0 24px; flex: none; }
.brand { margin: 1px 0 0 10px; color: #c4c4c4; font-size: 20px; letter-spacing: -.9px; }
.user { margin-left: auto; }

/* page */
.page { position: relative; height: 846px; display: flex; flex-direction: column; background: #bfbfbf; }
.band { height: 45px; display: flex; justify-content: flex-end; flex: none; }
.toolbar { height: 76px; background: #c6c6c6; border-bottom: 1px solid #b4b4b4; display: flex; justify-content: space-between; padding: 8px 25px 0; flex: none; }
.btn-datasets { width: 125px; height: 37px; margin-top: 11px; border: 1px solid #2b88b2; border-radius: 2px; background: none; color: #2b82ab; font-size: 17.5px; letter-spacing: -.4px; }
.spice { width: 371px; }
.spice-text { font-size: 17.5px; line-height: 21px; padding-bottom: 2px; color: #808080; white-space: nowrap; letter-spacing: -.2px; }
.spice-text b { font-weight: 400; color: #2b88b2; }
.meter { margin-top: 13px; height: 12px; border-radius: 6px; background: #b9b9b9; overflow: hidden; }
.meter i { display: block; height: 12px; background: #2b84ae; }
.content { flex: 1; display: flex; justify-content: space-between; overflow: hidden; min-height: 0; }
.sources { width: 1760px; padding-left: 25px; }
.track { width: 21px; background: #bababa; display: flex; flex-direction: column; align-items: center; }
.track-top { padding-top: 9px; }
.track .thumb { width: 17px; background: #989898; }
.track-top .thumb { height: 24px; margin-top: 7px; }
.track-main .thumb { height: 366px; }
.arrow { width: 0; height: 0; border: 5px solid transparent; }
.up { border-bottom-color: #7c7c7c; border-top-width: 0; }
.down { border-top-color: #444; border-bottom-width: 0; margin-top: 346px; }
h1 { font-size: 22.5px; line-height: 30px; font-weight: 400; color: #414141; letter-spacing: -.43px; margin-top: -9px; }
h2 { font-size: 17.5px; line-height: 24px; font-weight: 400; color: #414141; letter-spacing: -.15px; margin-top: 9px; }
.grid { display: grid; grid-template-columns: repeat(4, 415px); grid-auto-rows: 125px; gap: 25px; margin-left: 13px; }
.grid-first { margin-top: 23px; margin-bottom: 31px; }
.card { display: flex; align-items: center; border: 1px solid #9f9f9f; border-radius: 3px; background: #c6c6c6; box-shadow: 2px 3px 7px rgba(0,0,0,.22); }
.icon { width: 83px; height: 83px; border-right: 1px solid #b6b6b6; display: flex; align-items: center; justify-content: center; }
.icon svg { width: 60px; height: 60px; }
.label { display: flex; flex-direction: column; margin-left: 13px; white-space: nowrap; }
.name { font-size: 23px; line-height: 30px; color: #545454; letter-spacing: -.8px; margin-bottom: 2px; }
.wide { letter-spacing: -.58px; }
.upload { letter-spacing: -.48px; }
.two .name { margin: 2px 0 -1px; }
.sub { font-size: 15px; line-height: 24px; color: #7e7e7e; margin-top: 2px; letter-spacing: -.23px; }
.tight { letter-spacing: -.35px; }
.sf-text { font: 10px "Noto Sans", sans-serif; fill: #cfe3ec; text-anchor: middle; letter-spacing: -.3px; }
.spark-text { font: italic 600 20.5px "Open Sans", "Noto Sans", sans-serif; fill: #383736; letter-spacing: -.9px; }

/* dialog over the page */
.modal { position: absolute; left: 585px; top: -7px; width: 750px; height: 590px; background: #fff; border: 1px solid #bdbdbd; border-radius: 2px; box-shadow: 0 8px 25px rgba(0,0,0,.6); padding: 37px 37px 0 38px; color: #444; }
.modal-head { display: flex; justify-content: space-between; padding-right: 9px; height: 34px; margin-left: -1px; }
.modal-head svg { margin-top: 8px; }
h3 { font-size: 25px; line-height: 33px; font-weight: 400; color: #666; letter-spacing: -.35px; }
.modal p { font-size: 17.5px; line-height: 24px; letter-spacing: -.23px; margin-left: -1px; }
.modal a { color: #219fd9; letter-spacing: -.38px; }
.modal .learn { margin-top: 40px; }
.modal .set { margin-top: 19px; }
.modal .csv { margin-top: 10px; }
.preview { position: relative; width: 671px; height: 225px; margin-top: 36px; overflow: hidden; }
.preview::after { content: ""; position: absolute; top: 0; right: 0; width: 5px; height: 225px; background: linear-gradient(90deg, transparent, rgba(0,0,0,.14)); }
table { width: 754px; table-layout: fixed; border-collapse: separate; border-spacing: 4px 0; margin: 2px 0 0 -2px; color: #666; }
th { width: 121px; height: 34px; background: #ededed; text-align: left; font-size: 16.8px; font-weight: 700; padding: 0 0 4px 4.500px; letter-spacing: -.25px; white-space: nowrap; overflow: hidden; }
.loose { letter-spacing: .15px; }
td { height: 37.5px; font-size: 16px; padding: 2px 0 0 4.500px; letter-spacing: -.1px; white-space: nowrap; overflow: hidden; }
.date { letter-spacing: .58px; }
.hscroll { height: 19px; margin-top: 2px; border-left: 1px solid #ccc; padding: 3px 0 0 5px; }
.hscroll i { display: block; width: 180px; height: 14px; border-radius: 7px; background: #7e7e7e; }
.actions { display: flex; justify-content: space-between; margin-top: 25px; }
.actions button { height: 37px; font-size: 17.5px; letter-spacing: -.3px; border: 1px solid #219fd9; border-radius: 2px; background: #fff; color: #219fd9; padding-bottom: 1px; }
.btn-edit { width: 290px; }
.actions .btn-next { width: 125px; background: #219fd9; color: #fff; font-weight: 500; }

/* taskbar */
.taskbar { height: 60px; display: flex; align-items: center; border-top: 1px solid #4b4444; padding-left: 25px; background: linear-gradient(90deg, #26291e 0, #38201a 8%, #3b1c17 17%, #451417 21%, #3b1d13 26%, #35271a 38%, #30231a 47%, #471412 53%, #3b1c12 59%, #352112 66%, #2f1b20 72%, #35191e 78%, #2c1f1d 89%, #231f22 95%); flex: none; }
.search { width: 275px; height: 40px; margin: -1px 0 0 17px; border: 1px solid rgba(255,255,255,.13); border-radius: 20px; background: rgba(255,255,255,.13); display: flex; align-items: center; padding: 0 6px 0 14px; color: #e4dedc; font-size: 17.5px; }
.search span { margin: 0 0 0 12px; letter-spacing: -.6px; }
.art { margin-left: auto; }
.apps { display: flex; margin-left: 5px; gap: 5px; }
.app { position: relative; width: 50px; height: 50px; border-radius: 5px; }
.app > svg { width: 50px; height: 50px; }
.app-on { background: rgba(255,255,255,.08); }
.app > i { position: absolute; left: 21px; bottom: 1px; width: 8px; height: 4px; border-radius: 2px; background: #a09a98; }
.app-on > i { left: 15px; width: 20px; background: #4cc2ff; }
.one { font: 16px "Noto Sans", sans-serif; text-anchor: middle; fill: #222; }
.tray { margin-left: auto; display: flex; align-items: center; padding-right: 25px; color: #fff; }
.t-chev { margin-right: 21px; }
.t-wifi, .t-vol { margin-right: 10px; }
.t-bat { margin-right: 17px; }
.clock { display: flex; flex-direction: column; align-items: flex-end; font-size: 15px; line-height: 20px; letter-spacing: -.28px; margin: -4px 10px 0 0; width: 80px; }
.count { width: 20px; height: 20px; border-radius: 50%; background: #4cc2ff; color: #111; font-size: 13px; line-height: 19px; text-align: center; }
```
